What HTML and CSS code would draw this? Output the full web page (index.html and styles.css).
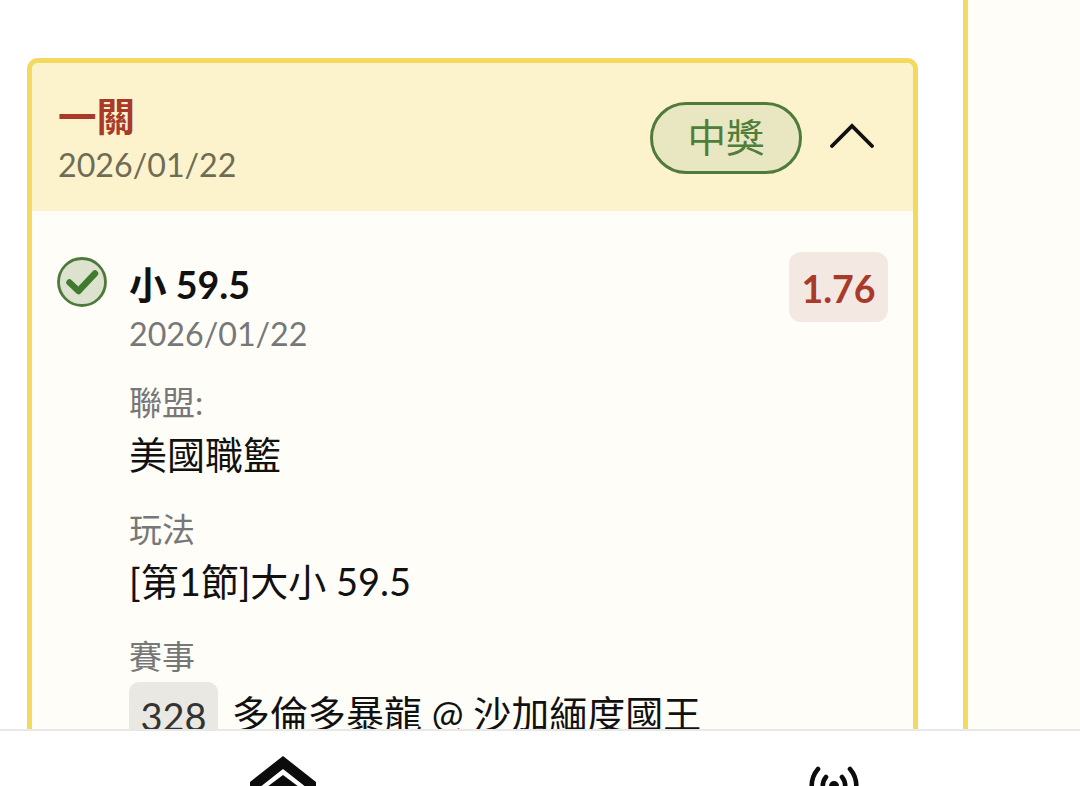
FILE: index.html
```html
<!DOCTYPE html>
<html lang="zh-Hant">
<head>
<meta charset="utf-8">
<title>一關</title>
<link rel="stylesheet" href="styles.css">
</head>
<body>
<main class="viewport">
  <div class="track">
    <section class="card">
      <header class="card-head">
        <div class="head-text">
          <h2 class="title">一關</h2>
          <div class="head-date">2026/01/22</div>
        </div>
        <span class="status">中獎</span>
        <svg class="chevron" viewBox="0 0 44 26" width="44" height="26"><path d="M2 24 L22 4 L42 24" fill="none" stroke="#111" stroke-width="3.8" stroke-linecap="round" stroke-linejoin="miter"/></svg>
      </header>
      <div class="card-body">
        <div class="bet-row">
          <svg class="check" viewBox="0 0 50 50" width="50" height="50"><circle cx="25" cy="25" r="23.5" fill="#dde2cf" stroke="#4d7a3a" stroke-width="2.8"/><path d="M12.5 25.5 L21.5 34 L38 16.5" fill="none" stroke="#3f7a2e" stroke-width="6.4" stroke-linecap="round" stroke-linejoin="round"/></svg>
          <div class="bet-main">
            <div class="bet-name">小 59.5</div>
            <div class="bet-date">2026/01/22</div>
            <div class="field-label first">聯盟:</div>
            <div class="field-value">美國職籃</div>
            <div class="field-label">玩法</div>
            <div class="field-value">[第1節]大小 59.5</div>
            <div class="field-label">賽事</div>
            <div class="match"><span class="match-no">328</span><span class="field-value">多倫多暴龍 @ 沙加緬度國王</span></div>
          </div>
          <span class="odds">1.76</span>
        </div>
      </div>
    </section>
    <div class="next-card"></div>
  </div>
</main>
<nav class="tabbar">
  <svg class="tab-home" viewBox="0 0 68 60" width="68" height="60"><path d="M34 1 L67 27 L67 40 L34 14 L1 40 L1 27 Z" fill="#0c0c0c"/><path d="M34 20 L58 38 L58 60 L10 60 L10 38 Z" fill="#0c0c0c"/></svg>
  <svg class="tab-live" viewBox="0 0 52 50" width="52" height="50"><g fill="none" stroke="#0c0c0c" stroke-width="4.6" stroke-linecap="round"><path d="M10 3 A26 26 0 0 0 10 37"/><path d="M42 3 A26 26 0 0 1 42 37"/><path d="M18 11 A14 14 0 0 0 18 29"/><path d="M34 11 A14 14 0 0 1 34 29"/></g><circle cx="26" cy="20" r="5" fill="#0c0c0c"/></svg>
</nav>
</body>
</html>
```
FILE: styles.css
```css
* { box-sizing: border-box; margin: 0; padding: 0; }
html, body { width: 1080px; height: 786px; overflow: hidden; background: #fff; }
body {
  display: flex;
  flex-direction: column;
  font-family: Lato, "Noto Sans CJK TC", sans-serif;
  color: #111;
}
.viewport { height: 729px; overflow: hidden; padding: 58px 0 0 27px; flex: none; }
.track { display: flex; gap: 45px; width: 1300px; }
.card {
  width: 891px;
  height: 900px;
  flex: none;
  border: 5px solid #f3d95f;
  border-radius: 11px;
  background: #fefdf7;
  overflow: hidden;
}
.next-card {
  width: 400px;
  height: 900px;
  flex: none;
  border-left: 5px solid #f3d95f;
  background: #fefdf7;
  margin-top: -58px;
}
.card-head {
  height: 148px;
  background: #fcf3cd;
  display: flex;
  align-items: center;
  padding: 0 39px 0 26px;
}
.head-text { flex: 1; align-self: flex-start; padding-top: 30px; }
.title { font-size: 38.5px; font-weight: 700; line-height: 46px; color: #a93a2a; }
.head-date { font-size: 32.2px; line-height: 42px; color: #6f6b55; margin-top: 5px; }
.status {
  width: 152px;
  height: 72px;
  border: 3px solid #4f7b3a;
  border-radius: 36px;
  background: #e9e6c2;
  color: #4f7d3b;
  font-size: 38.5px;
  line-height: 64px;
  text-align: center;
  margin-top: 1px;
}
.chevron { margin-left: 28px; margin-top: -4px; flex: none; }
.card-body { padding: 41px 25px 0 25px; }
.bet-row { display: flex; align-items: flex-start; }
.check { flex: none; margin-top: 5px; margin-right: 22px; }
.bet-main { flex: 1; padding-top: 11px; }
.bet-name { font-size: 37.6px; font-weight: 700; line-height: 44px; color: #111; }
.bet-date { font-size: 32.2px; line-height: 44px; color: #777; margin-top: 5px; }
.field-label { font-size: 33px; line-height: 44px; color: #777; margin-top: 27px; }
.field-label.first { margin-top: 24px; }
.field-value { font-size: 38px; line-height: 52px; color: #111; margin-top: 4px; }
.match { display: flex; align-items: flex-start; gap: 14px; margin-top: 4px; }
.match .field-value { margin-top: 5px; }
.match-no {
  width: 89px;
  height: 70px;
  background: #e9e8e2;
  border-radius: 10px;
  font-size: 38px;
  line-height: 68px;
  text-align: center;
  color: #333;
}
.odds {
  flex: none;
  width: 99px;
  height: 70px;
  background: #f4e8e2;
  border-radius: 12px;
  color: #a93a2a;
  font-size: 37.5px;
  font-weight: 700;
  line-height: 74px;
  text-align: center;
}
.tabbar {
  position: relative;
  height: 57px;
  flex: none;
  background: #fff;
  border-top: 2px solid #e8e8e8;
  overflow: hidden;
}
.tab-home { position: absolute; left: 249px; top: 24px; }
.tab-live { position: absolute; left: 808px; top: 35px; }
```
